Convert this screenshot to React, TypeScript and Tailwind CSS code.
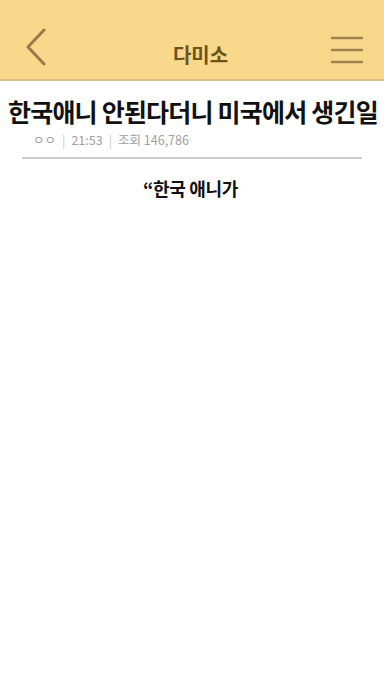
export default function App() {
  return (
    <div
      className="w-[384px] h-[683px] bg-white overflow-hidden"
      style={{ fontFamily: '"Noto Sans CJK KR", "Noto Sans", sans-serif' }}
    >
      {/* top bar */}
      <header className="h-[81px] bg-[#f8d98b] border-b-2 border-[#d9c08a] flex items-center justify-between px-[22px] pt-[14px]">
        <svg width="26" height="38" viewBox="0 0 26 38" className="ml-[1px]">
          <path d="M21 2 L5 19 L21 36" fill="none" stroke="#9a7a4a" strokeWidth="3" strokeLinecap="round" strokeLinejoin="round" />
        </svg>
        <h1 className="ml-[22px] text-[20px] font-bold text-[#6e521e] mt-[16px]">다미소</h1>
        <svg width="34" height="30" viewBox="0 0 34 30" className="mr-[-2px] mt-[6px]">
          <g stroke="#a08452" strokeWidth="2.5" strokeLinecap="round">
            <line x1="2" y1="3" x2="32" y2="3" />
            <line x1="2" y1="15" x2="32" y2="15" />
            <line x1="2" y1="27" x2="32" y2="27" />
          </g>
        </svg>
      </header>

      <main className="px-[8px]">
        <h2 className="mt-[13px] text-[25px] leading-[34px] font-bold text-[#111] tracking-[-0.8px] whitespace-nowrap">
          한국애니 안된다더니 미국에서 생긴일
        </h2>
        <div className="mt-[3px] pl-[25px] text-[12.5px] leading-[18px] text-[#a0a0a0] flex items-center gap-[6px]">
          <span>ㅇㅇ</span>
          <span className="text-[#c8c8c8]">|</span>
          <span>21:53</span>
          <span className="text-[#c8c8c8]">|</span>
          <span>조회 146,786</span>
        </div>
        <div className="mx-[14px] mt-[8px] h-[2px] bg-[#cfcfcf]" />
        <p className="mt-[17px] pr-[3px] text-center text-[18px] leading-[24px] font-bold text-[#111] tracking-[-0.3px]">
          “한국 애니가
        </p>
      </main>
    </div>
  );
}
